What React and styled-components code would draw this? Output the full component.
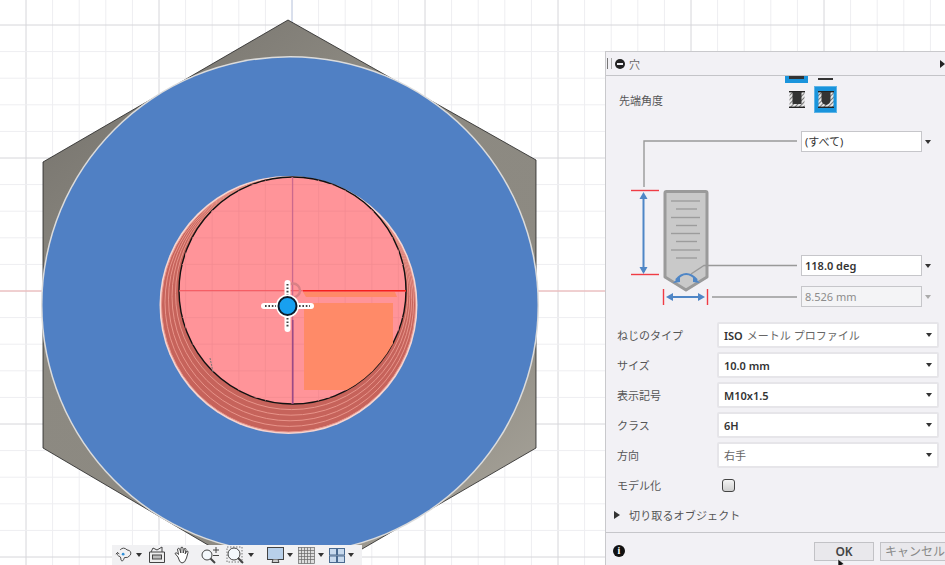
import React from 'react';
import styled, { createGlobalStyle } from 'styled-components';

const GlobalStyle = createGlobalStyle`
  html, body {
    margin: 0;
    padding: 0;
    background: #fff;
    font-family: "Noto Sans", "Noto Sans CJK JP", sans-serif;
  }
`

const Screen = styled.div`
  position: relative;
  width: 945px;
  height: 565px;
  overflow: hidden;
  background: #fff;
`
const Canvas = styled.svg`
  position: absolute;
  left: 0;
  top: 0;
`
const Panel = styled.div`
  position: absolute;
  left: 605px;
  top: 51px;
  width: 340px;
  height: 514px;
  box-sizing: border-box;
  display: flex;
  flex-direction: column;
  background: #f2f1f5;
  border-left: 1px solid #c9c9cc;
  border-top: 1px solid #c9c9cc;
  color: #555;
  font-size: 11px;
`
const Header = styled.div`
  flex: none;
  height: 23px;
  display: flex;
  align-items: center;
  border-bottom: 1px solid #c4c4c8;
  padding-left: 1px;
  color: #666;
`
const Grip = styled.span`
  width: 3px;
  height: 11px;
  border-left: 1px solid #777;
  border-right: 1px solid #aaa;
  margin-right: 3px;
`
const MinusBadge = styled.span`
  width: 10px;
  height: 10px;
  border-radius: 50%;
  background: #222;
  display: flex;
  align-items: center;
  justify-content: center;
  margin-right: 4px;
  &::after {
    content: "";
    width: 6px;
    height: 2px;
    background: #f2f1f5;
  }
`
const HeaderEnd = styled.span`
  margin-left: auto;
  display: flex;
  align-items: center;
  margin-right: -3px;
`
const Body = styled.div`
  flex: 1;
  min-height: 0;
  overflow: hidden;
  display: flex;
  flex-direction: column;
`
const ClippedIcons = styled.div`
  flex: none;
  height: 7px;
  overflow: hidden;
  display: flex;
  align-items: flex-end;
  padding-left: 179px;
  gap: 10px;
`
const ClippedSelected = styled.span`
  width: 23px;
  height: 7px;
  background: #1a94dc;
  display: flex;
  justify-content: center;
  &::after {
    content: "";
    width: 15px;
    height: 3px;
    background: #333;
  }
`
const ClippedPlain = styled.span`
  width: 15px;
  height: 2px;
  margin-bottom: 3px;
  background: #333;
`
const TipRow = styled.div`
  flex: none;
  height: 27px;
  margin-top: 3px;
  display: flex;
  align-items: center;
  padding-left: 13px;
`
const TipLabel = styled.span`
  width: 166px;
  flex: none;
`
const TipButton = styled.span`
  width: 23px;
  height: 27px;
  box-sizing: border-box;
  margin-right: 6px;
  display: flex;
  align-items: center;
  justify-content: center;
  background: ${p => (p.$active ? '#1a94dc' : 'transparent')};
  border: 1px solid ${p => (p.$active ? '#5fb4e6' : 'transparent')};
`
const Diagram = styled.div`
  flex: none;
  height: 176px;
  margin-top: 18px;
  display: flex;
`
const DiagramArt = styled.svg`
  flex: none;
  width: 195px;
  height: 176px;
`
const DiagramFields = styled.div`
  flex: none;
  width: 121px;
  display: flex;
  flex-direction: column;
`
const DimRow = styled.div`
  display: flex;
  align-items: center;
  width: 135px;
  margin-top: ${p => p.$top || 0}px;
`
const DimInput = styled.div`
  width: 121px;
  height: 21px;
  box-sizing: border-box;
  flex: none;
  border: 1px solid #c6c6ca;
  background: ${p => (p.$disabled ? '#f4f4f6' : '#fff')};
  color: ${p => (p.$disabled ? '#8c8c8c' : '#333')};
  font-weight: ${p => (p.$bold ? 600 : 400)};
  font-size: 11px;
  line-height: 19px;
  padding-left: 3px;
  white-space: nowrap;
`
const Caret = styled.span`
  width: 0;
  height: 0;
  margin-left: 3px;
  border-left: 3px solid transparent;
  border-right: 3px solid transparent;
  border-top: 4px solid ${p => (p.$muted ? '#aaa' : '#333')};
`
const Form = styled.div`
  flex: none;
  margin-top: 15px;
  display: flex;
  flex-direction: column;
  gap: 4px;
`
const Row = styled.div`
  display: flex;
  align-items: center;
  height: 26px;
  padding-left: 11px;
`
const RowLabel = styled.span`
  width: 100px;
  flex: none;
`
const Select = styled.div`
  width: 222px;
  height: 26px;
  box-sizing: border-box;
  display: flex;
  align-items: center;
  justify-content: space-between;
  background: #fff;
  border: 2px solid #e6e5e9;
  border-radius: 2px;
  padding: 0 5px 0 5px;
  color: ${p => (p.$plain ? '#666' : '#333')};
  font-weight: ${p => (p.$plain ? 400 : 600)};
`
const SelectText = styled.span`
  white-space: nowrap;
`
const LightText = styled.span`
  font-weight: 400;
  color: #666;
  margin-left: 4px;
`
const CheckBox = styled.span`
  width: 13px;
  height: 13px;
  margin-left: 5px;
  box-sizing: border-box;
  border: 1px solid #444;
  border-radius: 3px;
  background: linear-gradient(#f4f4f4, #cfcfcf);
`
const Section = styled.div`
  flex: none;
  height: 16px;
  margin-top: 9px;
  padding-left: 8px;
  display: flex;
  align-items: center;
  gap: 9px;
  letter-spacing: 0.15px;
`
const SectionArrow = styled.span`
  width: 0;
  height: 0;
  border-top: 4px solid transparent;
  border-bottom: 4px solid transparent;
  border-left: 6px solid #333;
`
const Footer = styled.div`
  flex: none;
  height: 28px;
  padding: 4px 0 0 7px;
  border-top: 1px solid #c6c6ca;
  display: flex;
  align-items: center;
`
const InfoBadge = styled.span`
  flex: none;
  width: 12px;
  height: 12px;
  border-radius: 50%;
  background: #111;
  color: #fff;
  font: bold 10px/12px "Liberation Serif", serif;
  text-align: center;
  margin-right: 189px;
`
const FooterButton = styled.span`
  flex: none;
  width: ${p => p.$width}px;
  height: 19px;
  box-sizing: border-box;
  margin-right: 6px;
  border: 1px solid #c2c2c6;
  background: #e9e8ec;
  text-align: center;
  line-height: 17px;
  font-size: 12px;
  white-space: nowrap;
  overflow: hidden;
  color: ${p => (p.$muted ? '#888' : '#444')};
  font-weight: ${p => (p.$muted ? 400 : 600)};
`
const Toolbar = styled.div`
  position: absolute;
  left: 112px;
  top: 545px;
  width: 250px;
  height: 20px;
  padding-left: 3px;
  box-sizing: border-box;
  display: flex;
  align-items: center;
  background: #f1f1f3;
`
const ToolSlot = styled.span`
  display: flex;
  align-items: center;
  margin-right: ${p => p.$gap || 0}px;
`
const ToolCaret = styled.span`
  width: 0;
  height: 0;
  margin-left: 3px;
  border-left: 3px solid transparent;
  border-right: 3px solid transparent;
  border-top: 4px solid #333;
`
const Pointer = styled.svg`
  position: absolute;
  left: 837px;
  top: 559px;
`

const step = 26.6
const xLines = Array.from({ length: 36 }, (_, i) => 292 - step * 10 + step * i)
const yLines = Array.from({ length: 22 }, (_, i) => 291 - step * 10 + step * i)
const isMajor = i => i % 5 === 0

const rings = Array.from({ length: 5 }, (_, i) => {
  const t = i / 5
  return {
    cx: 288.5 + 4 * t,
    cy: 305 - 14.5 * t,
    r: 127 - 13.5 * t,
  }
})

const Viewport = () => (
  <Canvas width="945" height="565" viewBox="0 0 945 565">
    <defs>
      <linearGradient id="nut" x1="0.15" y1="0" x2="0.85" y2="1">
        <stop offset="0" stopColor="#75726c" />
        <stop offset="0.3" stopColor="#8c8981" />
        <stop offset="0.7" stopColor="#8d8a82" />
        <stop offset="1" stopColor="#aaa69c" />
      </linearGradient>
      <clipPath id="hole">
        <circle cx="292.5" cy="290.5" r="113.5" />
      </clipPath>
    </defs>

    {xLines.map((x, i) => (
      <line key={x} x1={x} x2={x} y1="0" y2="565" stroke={isMajor(i) ? '#d6d6da' : '#eeeef1'} />
    ))}
    {yLines.map((y, i) => (
      <line key={y} x1="0" x2="945" y1={y} y2={y} stroke={isMajor(i) ? '#d6d6da' : '#eeeef1'} />
    ))}
    <line x1="0" x2="605" y1="291" y2="291" stroke="#f4b4b4" />
    <line x1="292" x2="292" y1="0" y2="30" stroke="#c8d4ec" />

    <polygon points="288,20 536,160 536,448 288,592 43,448 43,162" fill="url(#nut)" stroke="#222" strokeWidth="0.8" />
    <circle cx="290" cy="305" r="249" fill="#dcdcdc" />
    <circle cx="290" cy="305" r="247.5" fill="#5080c4" />

    <circle cx="288.5" cy="305" r="129" fill="#f6d4cf" />
    {rings.map((c, i) => (
      <circle key={i} cx={c.cx} cy={c.cy} r={c.r} fill="#c6635b" stroke="#e8948a" strokeWidth="1" />
    ))}
    <circle cx="292.5" cy="290.5" r="113.5" fill="#ff9499" stroke="#111" strokeWidth="1.4" />
    <g clipPath="url(#hole)">
      {xLines.map(x => (
        <line key={x} x1={x} x2={x} y1="170" y2="410" stroke="#f48c92" strokeWidth="0.8" />
      ))}
      {yLines.map(y => (
        <line key={y} x1="170" x2="415" y1={y} y2={y} stroke="#f48c92" strokeWidth="0.8" />
      ))}
      <polygon points="304,303 393,303 393,390 304,390" fill="#ff8a68" />
      <polygon points="303,292 395,292 397,297 306,297" fill="#ff8a68" />
      <line x1="179" x2="406" y1="290.7" y2="290.7" stroke="#f0454c" strokeWidth="0.8" />
      <line x1="303" x2="406" y1="290.7" y2="290.7" stroke="#f5201c" strokeWidth="1.6" />
      <line x1="292.7" x2="292.7" y1="177" y2="404" stroke="#c0608c" strokeWidth="1" />
      <line x1="292.7" x2="292.7" y1="320" y2="404" stroke="#9a4a86" strokeWidth="1.6" />
    </g>
    <circle cx="293" cy="290.5" r="7" fill="none" stroke="#d98086" strokeWidth="2.4" />

    <path d="M210 358 L213 372" stroke="#777" strokeWidth="1" strokeDasharray="2 1" />

    <g>
      <line x1="264" x2="311" y1="306" y2="306" stroke="#fff" strokeWidth="6" strokeLinecap="round" />
      <line x1="287.5" x2="287.5" y1="283" y2="329" stroke="#fff" strokeWidth="6" strokeLinecap="round" />
      <line x1="265" x2="310" y1="306" y2="306" stroke="#444" strokeWidth="2" strokeDasharray="1.6 1.8" />
      <line x1="287.5" x2="287.5" y1="284" y2="328" stroke="#444" strokeWidth="2" strokeDasharray="1.6 1.8" />
      <circle cx="287.5" cy="306" r="11.5" fill="#fff" />
      <circle cx="287.5" cy="306" r="9" fill="#18a0f0" stroke="#0c1c2c" strokeWidth="2" />
    </g>
  </Canvas>
)

const HoleIcon = ({ round }) => (
  <svg width="16" height="17" viewBox="0 0 16 17">
    <defs>
      <pattern id={round ? 'hatchB' : 'hatchA'} width="3" height="3" patternUnits="userSpaceOnUse" patternTransform="rotate(45)">
        <rect width="3" height="3" fill="#e8e8e8" />
        <rect width="1" height="3" fill="#777" />
      </pattern>
    </defs>
    <rect x="0.5" y="0.5" width="15" height="16" fill={`url(#${round ? 'hatchB' : 'hatchA'})`} />
    <line x1="0" x2="16" y1="0.7" y2="0.7" stroke="#222" strokeWidth="1.4" />
    <line x1="0" x2="16" y1="16.3" y2="16.3" stroke="#222" strokeWidth="1.4" />
    {round
      ? <path d="M3.5 1 H12.5 V9 Q12.5 13 8 14 Q3.5 13 3.5 9 Z" fill="#333" />
      : <rect x="3.5" y="1" width="9" height="12" fill="#333" />}
  </svg>
)

const threadLines = [201, 209, 217.5, 225.5, 233.5, 241.5, 250, 258]

// the drawing coordinates are page x - 606, page y - 131
const HoleDiagram = () => (
  <DiagramArt viewBox="0 0 195 176">
    <path d="M38 56 V10 H191" fill="none" stroke="#999" strokeWidth="1.4" />
    <line x1="25" x2="53" y1="59.5" y2="59.5" stroke="#f03c44" strokeWidth="1.4" />
    <line x1="25" x2="53" y1="143.5" y2="143.5" stroke="#f03c44" strokeWidth="1.4" />
    <line x1="37.5" x2="37.5" y1="64" y2="141" stroke="#4f86c6" strokeWidth="2" />
    <polygon points="37.5,61 33.5,68 41.5,68" fill="#4f86c6" />
    <polygon points="37.5,143 33.5,136 41.5,136" fill="#4f86c6" />

    <path d="M59 62 Q59 60.5 60.5 60.5 H99.5 Q101 60.5 101 62 V146 L80 159 L59 146 Z" fill="#c9c9c9" stroke="#9a9a9a" strokeWidth="3" strokeLinejoin="round" />
    {threadLines.map((y, i) => (
      <line key={y} x1={i % 2 ? 70 : 65} x2={i % 2 ? 91 : 94} y1={y - 131} y2={y - 131} stroke="#9c9c9c" strokeWidth="1.4" />
    ))}
    <path d="M191 134.5 H98 L85 143" fill="none" stroke="#999" strokeWidth="1.4" />
    <path d="M70 149 Q80 137 91 149" fill="none" stroke="#4f86c6" strokeWidth="2" />
    <polygon points="67,152 74,145 74,151" fill="#4f86c6" />
    <polygon points="94,152 87,145 87,151" fill="#4f86c6" />

    <line x1="57.5" x2="57.5" y1="158" y2="174" stroke="#f03c44" strokeWidth="1.4" />
    <line x1="101.5" x2="101.5" y1="158" y2="174" stroke="#f03c44" strokeWidth="1.4" />
    <line x1="62" x2="97" y1="166" y2="166" stroke="#4f86c6" strokeWidth="2" />
    <polygon points="60,166 67,162 67,170" fill="#4f86c6" />
    <polygon points="99,166 92,162 92,170" fill="#4f86c6" />
    <line x1="106" x2="191" y1="166" y2="166" stroke="#999" strokeWidth="1.4" />
  </DiagramArt>
)

const OrbitIcon = () => (
  <svg width="18" height="18" viewBox="0 0 21 18" fill="none" stroke="#444" strokeWidth="1.1">
    <path d="M6 3 Q10 -1 14 3 Q20 4 18 9 Q15 13 11 12 Q9 18 7 15 Q7 12 6 11 Q1 9 3 6" />
    <circle cx="9.5" cy="8" r="1.6" fill="#2f8fd8" stroke="none" />
    <path d="M1 8 L3 6 L5 8" />
  </svg>
)
const CaptureIcon = () => (
  <svg width="18" height="18" viewBox="0 0 18 18" fill="none" stroke="#444" strokeWidth="1">
    <path d="M1.5 6 H16.5 V16.5 H1.5 Z" fill="#eee" />
    <rect x="4.5" y="9" width="9" height="4" fill="#bbb" />
    <path d="M3 6 L5 2 L9 4 L14 1 V6" />
  </svg>
)
const HandIcon = () => (
  <svg width="18" height="18" viewBox="0 0 18 18" fill="#fff" stroke="#444" strokeWidth="1" strokeLinejoin="round">
    <path d="M5 11 L2 7.5 Q3 6 4.5 7.5 L5.5 8.5 L4.5 3 Q6 1.5 6.8 3 L7.8 7 L8 1.5 Q9.5 0.5 10 2 L10.2 7 L11.5 2.5 Q13 2 13 3.5 L12.2 7.8 L14 5 Q15.5 5 15 6.5 L13.5 12 Q12 17 9 17 Q6.5 17 5 11 Z" />
  </svg>
)
const ZoomPlusIcon = () => (
  <svg width="20" height="18" viewBox="0 0 20 18" fill="none" stroke="#444" strokeWidth="1">
    <circle cx="7" cy="9" r="5" fill="#f4f8fc" />
    <line x1="10.5" y1="12.5" x2="15" y2="17" strokeWidth="2" />
    <path d="M13 4 H19 M16 1 V7 M13 9.5 H19" />
  </svg>
)
const ZoomWindowIcon = () => (
  <svg width="19" height="19" viewBox="0 0 19 19" fill="none" stroke="#444" strokeWidth="1">
    <rect x="1" y="1" width="15" height="15" strokeDasharray="1.5 1.5" stroke="#777" />
    <circle cx="8" cy="8" r="6" fill="#f4f8fc" />
    <line x1="12" y1="12" x2="17" y2="17" strokeWidth="2" />
  </svg>
)
const MonitorIcon = () => (
  <svg width="17" height="18" viewBox="0 0 17 18" stroke="#444" strokeWidth="1">
    <rect x="0.5" y="1.5" width="16" height="12" fill="#b8d0ea" />
    <path d="M6 13.5 L5 16.5 H12 L11 13.5" fill="#ccc" />
  </svg>
)
const GridIcon = () => (
  <svg width="17" height="17" viewBox="0 0 17 17" stroke="#666" strokeWidth="0.7" fill="#ddd">
    <rect x="0.5" y="0.5" width="16" height="16" />
    <path d="M3.5 0.5 V16.5 M6.5 0.5 V16.5 M9.5 0.5 V16.5 M12.5 0.5 V16.5 M0.5 3.5 H16.5 M0.5 6.5 H16.5 M0.5 9.5 H16.5 M0.5 12.5 H16.5" fill="none" />
  </svg>
)
const ViewsIcon = () => (
  <svg width="16" height="15" viewBox="0 0 16 15" stroke="#4a6a90" strokeWidth="1" fill="#c8daee">
    <rect x="0.5" y="0.5" width="7" height="6.5" />
    <rect x="8.5" y="0.5" width="7" height="6.5" />
    <rect x="0.5" y="8" width="7" height="6.5" />
    <rect x="8.5" y="8" width="7" height="6.5" />
  </svg>
)

const App = () => (
  <Screen>
    <GlobalStyle />
    <Viewport />

    <Toolbar>
      <ToolSlot $gap={6}><OrbitIcon /><ToolCaret /></ToolSlot>
      <ToolSlot $gap={7}><CaptureIcon /></ToolSlot>
      <ToolSlot $gap={9}><HandIcon /></ToolSlot>
      <ToolSlot $gap={6}><ZoomPlusIcon /></ToolSlot>
      <ToolSlot $gap={13}><ZoomWindowIcon /><ToolCaret /></ToolSlot>
      <ToolSlot $gap={5}><MonitorIcon /><ToolCaret /></ToolSlot>
      <ToolSlot $gap={5}><GridIcon /><ToolCaret /></ToolSlot>
      <ToolSlot><ViewsIcon /><ToolCaret /></ToolSlot>
    </Toolbar>

    <Panel>
      <Header>
        <Grip />
        <MinusBadge />
        穴
        <HeaderEnd>
          <svg width="8" height="8" viewBox="0 0 8 8" fill="#222">
            <polygon points="0,0 5,4 0,8" />
            <rect x="5.5" y="0" width="2" height="8" />
          </svg>
        </HeaderEnd>
      </Header>

      <Body>
        <ClippedIcons>
          <ClippedSelected />
          <ClippedPlain />
        </ClippedIcons>
        <TipRow>
          <TipLabel>先端角度</TipLabel>
          <TipButton><HoleIcon /></TipButton>
          <TipButton $active><HoleIcon round /></TipButton>
        </TipRow>

        <Diagram>
          <HoleDiagram />
          <DiagramFields>
            <DimRow>
              <DimInput>(すべて)</DimInput>
              <Caret />
            </DimRow>
            <DimRow $top={103}>
              <DimInput $bold>118.0 deg</DimInput>
              <Caret />
            </DimRow>
            <DimRow $top={10}>
              <DimInput $disabled>8.526 mm</DimInput>
              <Caret $muted />
            </DimRow>
          </DiagramFields>
        </Diagram>

        <Form>
          <Row>
            <RowLabel>ねじのタイプ</RowLabel>
            <Select>
              <SelectText>ISO<LightText>メートル プロファイル</LightText></SelectText>
              <Caret />
            </Select>
          </Row>
          <Row>
            <RowLabel>サイズ</RowLabel>
            <Select><SelectText>10.0 mm</SelectText><Caret /></Select>
          </Row>
          <Row>
            <RowLabel>表示記号</RowLabel>
            <Select><SelectText>M10x1.5</SelectText><Caret /></Select>
          </Row>
          <Row>
            <RowLabel>クラス</RowLabel>
            <Select><SelectText>6H</SelectText><Caret /></Select>
          </Row>
          <Row>
            <RowLabel>方向</RowLabel>
            <Select $plain><SelectText>右手</SelectText><Caret /></Select>
          </Row>
          <Row>
            <RowLabel>モデル化</RowLabel>
            <CheckBox />
          </Row>
        </Form>

        <Section>
          <SectionArrow />
          切り取るオブジェクト
        </Section>
      </Body>

      <Footer>
        <InfoBadge>i</InfoBadge>
        <FooterButton $width={60}>OK</FooterButton>
        <FooterButton $width={70} $muted>キャンセル</FooterButton>
      </Footer>
    </Panel>

    <Pointer width="8" height="8" viewBox="0 0 8 8">
      <polygon points="1,0 1,8 7,5" fill="#111" stroke="#fff" strokeWidth="0.6" />
    </Pointer>
  </Screen>
)

export default App
